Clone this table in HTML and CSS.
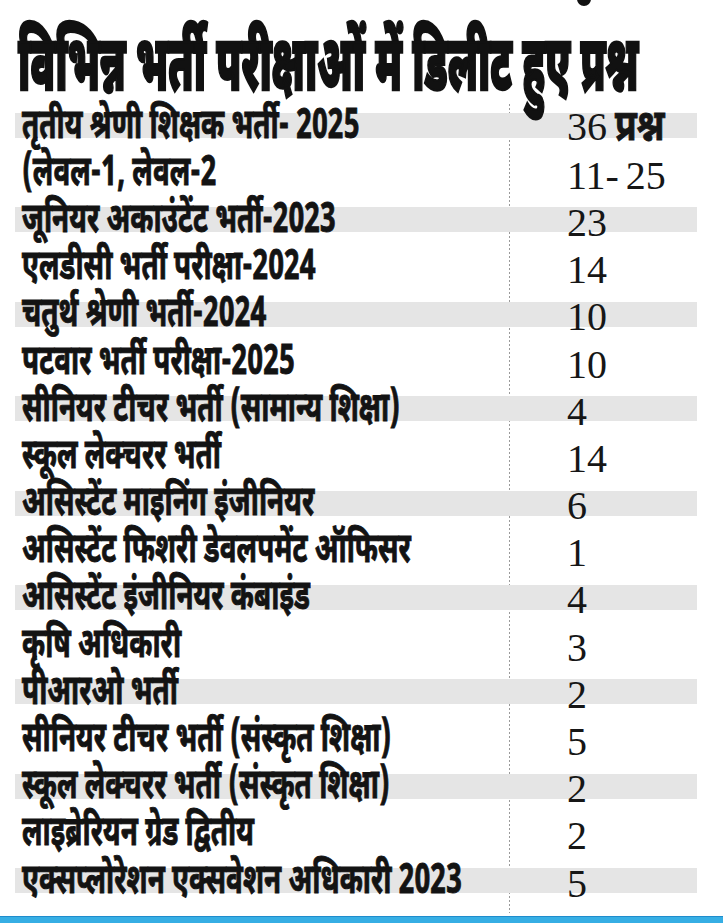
FILE: index.html
```html
<!DOCTYPE html>
<html lang="hi">
<head>
<meta charset="utf-8">
<title>विभिन्न भर्ती परीक्षाओं में डिलीट हुए प्रश्न</title>
<link rel="stylesheet" href="styles.css">
</head>
<body>
<div class="page">
  <header class="head">
    <span class="blob"></span>
    <h1 class="title"><span class="sq">विभिन्न भर्ती परीक्षाओं में डिलीट हुए प्रश्न</span></h1>
  </header>
  <div class="table">
    <div class="row alt"><div class="name"><span class="sq">तृतीय श्रेणी शिक्षक भर्ती- 2025</span></div><div class="val">36 <span class="unit">प्रश्न</span></div></div>
    <div class="row"><div class="name"><span class="sq">(लेवल-1, लेवल-2</span></div><div class="val">11- 25</div></div>
    <div class="row alt"><div class="name"><span class="sq">जूनियर अकाउंटेंट भर्ती-2023</span></div><div class="val">23</div></div>
    <div class="row"><div class="name"><span class="sq">एलडीसी भर्ती परीक्षा-2024</span></div><div class="val">14</div></div>
    <div class="row alt"><div class="name"><span class="sq">चतुर्थ श्रेणी भर्ती-2024</span></div><div class="val">10</div></div>
    <div class="row"><div class="name"><span class="sq">पटवार भर्ती परीक्षा-2025</span></div><div class="val">10</div></div>
    <div class="row alt"><div class="name"><span class="sq">सीनियर टीचर भर्ती (सामान्य शिक्षा)</span></div><div class="val">4</div></div>
    <div class="row"><div class="name"><span class="sq">स्कूल लेक्चरर भर्ती</span></div><div class="val">14</div></div>
    <div class="row alt"><div class="name"><span class="sq">असिस्टेंट माइनिंग इंजीनियर</span></div><div class="val">6</div></div>
    <div class="row"><div class="name"><span class="sq">असिस्टेंट फिशरी डेवलपमेंट ऑफिसर</span></div><div class="val">1</div></div>
    <div class="row alt"><div class="name"><span class="sq">असिस्टेंट इंजीनियर कंबाइंड</span></div><div class="val">4</div></div>
    <div class="row"><div class="name"><span class="sq">कृषि अधिकारी</span></div><div class="val">3</div></div>
    <div class="row alt"><div class="name"><span class="sq">पीआरओ भर्ती</span></div><div class="val">2</div></div>
    <div class="row"><div class="name"><span class="sq">सीनियर टीचर भर्ती (संस्कृत शिक्षा)</span></div><div class="val">5</div></div>
    <div class="row alt"><div class="name"><span class="sq">स्कूल लेक्चरर भर्ती (संस्कृत शिक्षा)</span></div><div class="val">2</div></div>
    <div class="row"><div class="name"><span class="sq">लाइब्रेरियन ग्रेड द्वितीय</span></div><div class="val">2</div></div>
    <div class="row alt"><div class="name"><span class="sq">एक्सप्लोरेशन एक्सवेशन अधिकारी 2023</span></div><div class="val">5</div></div>
  </div>
  <div class="rule"></div>
</div>
</body>
</html>
```
FILE: styles.css
```css
html, body {
  margin: 0;
  padding: 0;
  background: #ffffff;
}
body {
  width: 723px;
  height: 923px;
  overflow: hidden;
  font-family: "Noto Sans Devanagari", "Noto Sans", "Lohit Devanagari", "FreeSans", sans-serif;
  color: #141414;
}
.page {
  display: flex;
  flex-direction: column;
  overflow: hidden;
}
.head {
  position: relative;
  height: 102px;
}
.blob {
  position: absolute;
  left: 577px;
  top: -8px;
  width: 14px;
  height: 14px;
  border-radius: 50%;
  background: #111;
}
.title {
  margin: 0;
  padding: 41px 0 0 18px;
  font-size: 77px;
  line-height: 60px;
  font-weight: 900;
  white-space: nowrap;
  color: #111;
  -webkit-text-stroke: 2.4px #111;
}
.sq {
  display: inline-block;
  transform-origin: left center;
  white-space: nowrap;
}
.title .sq {
  transform: scaleX(0.507);
}
.table {
  margin-left: 15px;
  width: 682px;
  padding: 0 0 9px;
  background: linear-gradient(#9a9a9a 50%, transparent 50%) 494px -2px / 1px 4px repeat-y;
}
.row {
  display: flex;
  align-items: center;
  height: 47.2px;
}
.row.alt {
  background: linear-gradient(to bottom, transparent 11px, #e5e5e5 11px, #e5e5e5 36px, transparent 36px);
}
.name {
  width: 552px;
  padding: 4px 0 0 7px;
  box-sizing: border-box;
  font-size: 41px;
  font-weight: 700;
  line-height: 40px;
  color: #131313;
  -webkit-text-stroke: 0.9px #131313;
}
.name .sq {
  transform: scaleX(0.68);
}
.val {
  padding-top: 6px;
  font-family: "Liberation Serif", "DejaVu Serif", serif;
  font-size: 40px;
  line-height: 40px;
  color: #161616;
  white-space: nowrap;
  word-spacing: -3px;
}
.unit {
  display: inline-block;
  font-family: "Noto Sans Devanagari", "Noto Sans", sans-serif;
  font-weight: 700;
  font-size: 43px;
  line-height: 40px;
  transform: scaleX(0.82);
  transform-origin: left center;
  margin-left: 1px;
  word-spacing: 0;
  -webkit-text-stroke: 0.9px #161616;
}
.rule {
  height: 6px;
  margin-top: 3px;
  background: #36aee4;
  border-top: 1px solid #1f8ccc;
}
```
